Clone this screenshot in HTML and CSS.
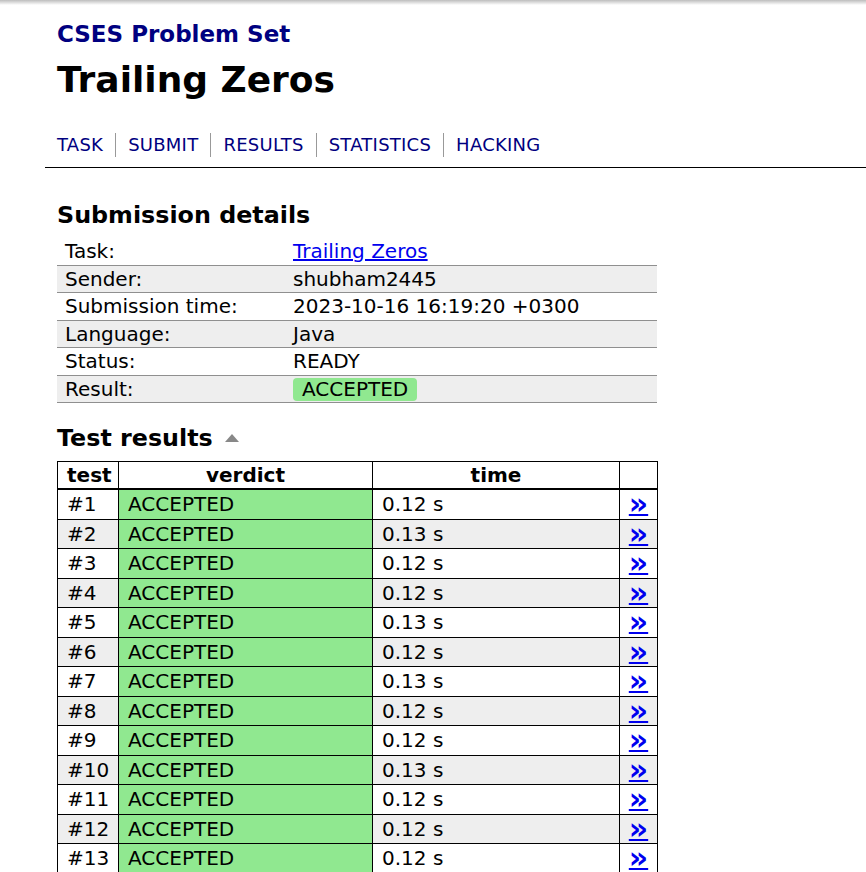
FILE: index.html
```html
<!DOCTYPE html>
<html>
<head>
<meta charset="utf-8">
<title>CSES - Trailing Zeros - Results</title>
<link rel="stylesheet" href="styles.css">
</head>
<body>
<div class="topshade"></div>
<div class="page">
  <header class="header">
    <a class="site" href="#">CSES Problem Set</a>
    <h1 class="title">Trailing Zeros</h1>
    <nav class="nav">
      <a href="#">TASK</a><a href="#">SUBMIT</a><a href="#">RESULTS</a><a href="#">STATISTICS</a><a href="#">HACKING</a>
    </nav>
  </header>
  <hr class="rule">
  <main class="content">
    <h3 class="section">Submission details</h3>
    <table class="details">
      <tr><td class="key">Task:</td><td class="val"><a class="tasklink" href="#">Trailing Zeros</a></td></tr>
      <tr class="alt"><td class="key">Sender:</td><td class="val">shubham2445</td></tr>
      <tr><td class="key">Submission time:</td><td class="val">2023-10-16 16:19:20 +0300</td></tr>
      <tr class="alt"><td class="key">Language:</td><td class="val">Java</td></tr>
      <tr><td class="key">Status:</td><td class="val">READY</td></tr>
      <tr class="alt"><td class="key">Result:</td><td class="val"><span class="badge">ACCEPTED</span></td></tr>
    </table>
    <h3 class="section results-head">Test results <span class="tri"></span></h3>
    <table class="results">
      <thead>
        <tr><th class="c-test">test</th><th class="c-verdict">verdict</th><th class="c-time">time</th><th class="c-link"></th></tr>
      </thead>
      <tbody>
        <tr><td>#1</td><td class="ok">ACCEPTED</td><td>0.12 s</td><td class="lk"><a href="#">»</a></td></tr>
        <tr class="alt"><td>#2</td><td class="ok">ACCEPTED</td><td>0.13 s</td><td class="lk"><a href="#">»</a></td></tr>
        <tr><td>#3</td><td class="ok">ACCEPTED</td><td>0.12 s</td><td class="lk"><a href="#">»</a></td></tr>
        <tr class="alt"><td>#4</td><td class="ok">ACCEPTED</td><td>0.12 s</td><td class="lk"><a href="#">»</a></td></tr>
        <tr><td>#5</td><td class="ok">ACCEPTED</td><td>0.13 s</td><td class="lk"><a href="#">»</a></td></tr>
        <tr class="alt"><td>#6</td><td class="ok">ACCEPTED</td><td>0.12 s</td><td class="lk"><a href="#">»</a></td></tr>
        <tr><td>#7</td><td class="ok">ACCEPTED</td><td>0.13 s</td><td class="lk"><a href="#">»</a></td></tr>
        <tr class="alt"><td>#8</td><td class="ok">ACCEPTED</td><td>0.12 s</td><td class="lk"><a href="#">»</a></td></tr>
        <tr><td>#9</td><td class="ok">ACCEPTED</td><td>0.12 s</td><td class="lk"><a href="#">»</a></td></tr>
        <tr class="alt"><td>#10</td><td class="ok">ACCEPTED</td><td>0.13 s</td><td class="lk"><a href="#">»</a></td></tr>
        <tr><td>#11</td><td class="ok">ACCEPTED</td><td>0.12 s</td><td class="lk"><a href="#">»</a></td></tr>
        <tr class="alt"><td>#12</td><td class="ok">ACCEPTED</td><td>0.12 s</td><td class="lk"><a href="#">»</a></td></tr>
        <tr><td>#13</td><td class="ok">ACCEPTED</td><td>0.12 s</td><td class="lk"><a href="#">»</a></td></tr>
      </tbody>
    </table>
  </main>
</div>
</body>
</html>
```
FILE: styles.css
```css
html, body {
  margin: 0;
  padding: 0;
  background: #fff;
}
body {
  font-family: "DejaVu Sans", Verdana, sans-serif;
  font-size: 20px;
  color: #000;
  overflow: hidden;
}
.topshade {
  height: 5px;
  background: linear-gradient(#bdbdbd, #ffffff);
}
.page {
  margin-left: 45px;
}
.header {
  padding: 15px 0 0 12px;
}
.site {
  display: block;
  font-size: 23px;
  line-height: 28px;
  font-weight: bold;
  color: #000080;
  text-decoration: none;
}
.title {
  margin: 10px 0 0 0;
  font-size: 36px;
  line-height: 44px;
  font-weight: bold;
}
.nav {
  display: flex;
  margin-top: 31px;
  font-size: 18px;
  line-height: 24px;
  letter-spacing: 0.25px;
}
.nav a {
  color: #000080;
  text-decoration: none;
  padding: 0 12px 0 12px;
  border-left: 1px solid #999;
}
.nav a:first-child {
  padding-left: 0;
  padding-right: 12px;
  border-left: none;
}
.rule {
  margin: 10px 0 0 0;
  border: none;
  border-top: 1px solid #000;
  height: 0;
}
.content {
  padding-left: 12px;
}
.section {
  margin: 33px 0 9px 0;
  font-size: 23.8px;
  line-height: 28px;
  font-weight: bold;
}
.details {
  border-collapse: collapse;
  width: 600px;
}
.details td {
  line-height: 26.5px;
  border-bottom: 1px solid #8f8f8f;
  vertical-align: middle;
}
.details td.key {
  width: 220px;
  padding: 0 8px;
}
.details td.val {
  padding: 0;
}
.details tr.alt td {
  background: #eee;
}
.tasklink {
  color: #0000ee;
  text-decoration: underline;
}
.badge {
  display: inline-block;
  background: #90e890;
  border-radius: 4px;
  padding: 0 9px;
  line-height: 23px;
}
.results-head {
  margin-top: 21px;
}
.tri {
  display: inline-block;
  width: 0;
  height: 0;
  border-left: 7.5px solid transparent;
  border-right: 7.5px solid transparent;
  border-bottom: 8px solid #888;
  vertical-align: 4px;
  margin-left: 4px;
}
.results {
  border-collapse: collapse;
  width: 600px;
  table-layout: fixed;
}
.results th, .results td {
  border: 1px solid #000;
  padding: 0 9px;
  text-align: left;
}
.results th {
  text-align: center;
  font-weight: bold;
  line-height: 26px;
  border-bottom: 2px solid #000;
}
.results td {
  line-height: 28.5px;
  height: 28.5px;
}
.results th.c-test { width: 42px; }
.results th.c-verdict { width: 235px; }
.results th.c-time { width: 228px; }
.results th.c-link { width: 37px; padding: 0; }
.results tr.alt td {
  background: #eee;
}
.results td.ok,
.results tr.alt td.ok {
  background: #90e890;
}
.results td.lk {
  text-align: center;
  padding: 0;
}
.lk a {
  display: inline-block;
  color: #0000ee;
  font-weight: bold;
  font-size: 30px;
  line-height: 16px;
  vertical-align: -3px;
  text-decoration: underline;
  text-decoration-thickness: 2px;
  text-underline-offset: 0px;
}
```
